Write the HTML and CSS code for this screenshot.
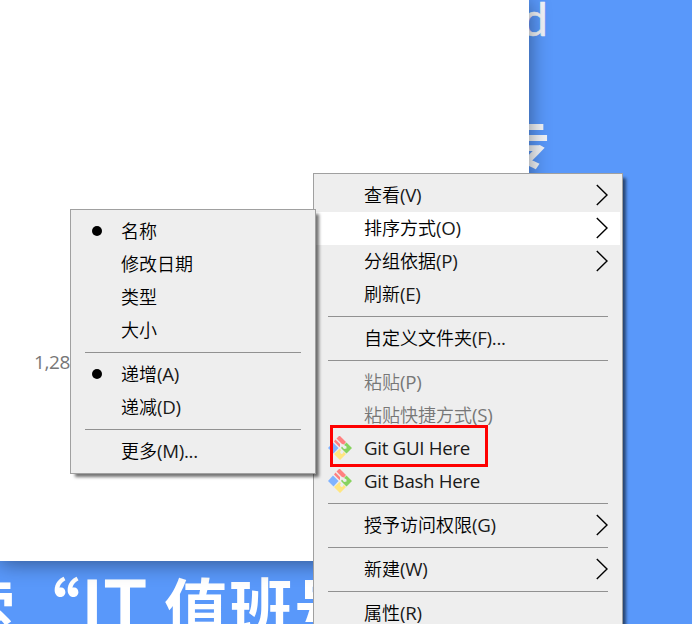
FILE: index.html
```html
<!DOCTYPE html>
<html lang="zh-CN">
<head>
<meta charset="utf-8">
<title>Desktop</title>
<link rel="stylesheet" href="styles.css">
</head>
<body>
<svg class="defs" width="0" height="0">
  <symbol id="git" viewBox="0 0 24 24">
    <path fill="#ff8080" d="M12 0L18 6L16 8.500L14 8L8.500 2.500L11 0ZM7.500 3.500L12 8L12 11L11 10.500L6 5.500Z"/>
    <path fill="#80b3ff" d="M5 6.500L10.500 12L5.500 17.500L0 12Z"/>
    <path fill="#87d35f" d="M18.500 6.500L24 12L18.500 17.500L13 12L14 10.500L16 13L18.500 12.500L18.500 10.500L16 9Z"/>
    <path fill="#ffe680" d="M11.500 13L13 14L12 16L13 18L15 17.500L15.500 15.500L18 18L12 24L6 18Z"/>
  </symbol>
  <symbol id="chev" viewBox="0 0 12 22"><path d="M.8 1L11 11L.8 21" fill="none" stroke="#000" stroke-width="1.400"/></symbol>
</svg>
<div class="desktop">
  <div class="wall wall-d">d</div>
  <div class="wall wall-zhuan">专</div>
  <div class="wall wall-line"><span class="cjk">索</span><span class="cjk">“</span><span class="it">IT</span><span class="cjk">值</span><span class="cjk">班</span><span class="cjk">号</span></div>
  <div class="window"><span class="size">1,28</span></div>

  <div class="menu main">
    <div class="item"><span>查看<i>(V)</i></span><svg class="chev"><use href="#chev"/></svg></div>
    <div class="item active"><span>排序方式<i>(O)</i></span><svg class="chev"><use href="#chev"/></svg></div>
    <div class="item"><span>分组依据<i>(P)</i></span><svg class="chev"><use href="#chev"/></svg></div>
    <div class="item"><span>刷新<i>(E)</i></span></div>
    <hr>
    <div class="item"><span>自定义文件夹<i>(F)...</i></span></div>
    <hr>
    <div class="item disabled"><span>粘贴<i>(P)</i></span></div>
    <div class="item disabled"><span>粘贴快捷方式<i>(S)</i></span></div>
    <div class="item"><svg class="git"><use href="#git"/></svg><span><i>Git GUI Here</i></span></div>
    <div class="item"><svg class="git"><use href="#git"/></svg><span><i>Git Bash Here</i></span></div>
    <hr>
    <div class="item"><span>授予访问权限<i>(G)</i></span><svg class="chev"><use href="#chev"/></svg></div>
    <hr>
    <div class="item"><span>新建<i>(W)</i></span><svg class="chev"><use href="#chev"/></svg></div>
    <hr>
    <div class="item"><span>属性<i>(R)</i></span></div>
  </div>

  <div class="menu sub">
    <div class="item"><b class="dot"></b><span>名称</span></div>
    <div class="item"><span>修改日期</span></div>
    <div class="item"><span>类型</span></div>
    <div class="item"><span>大小</span></div>
    <hr>
    <div class="item"><b class="dot"></b><span>递增<i>(A)</i></span></div>
    <div class="item"><span>递减<i>(D)</i></span></div>
    <hr>
    <div class="item"><span>更多<i>(M)...</i></span></div>
  </div>
  <div class="mark"></div>
</div>
</body>
</html>
```
FILE: styles.css
```css
body { margin: 0; }
.defs { position: absolute; }
.desktop {
  position: relative;
  width: 692px;
  height: 624px;
  overflow: hidden;
  background: #5998fa;
  font-family: "Noto Sans CJK SC", sans-serif;
}
.wall { position: absolute; color: #fff; white-space: nowrap; }
.wall-d {
  left: 522px; top: -11px;
  font: 46px/60px Lato, sans-serif;
  color: #f1f4f8;
  -webkit-text-stroke: .6px #f1f4f8;
}
.wall-zhuan { left: 498px; top: 112px; font-size: 52px; line-height: 60px; font-weight: 700; color: #f1f4f8; }
.wall-line {
  left: -49px; top: 566px;
  display: flex;
  font-size: 64px; line-height: 76px; font-weight: 700;
}
.wall-line .cjk { width: 65px; }
.wall-line .it {
  width: 83px;
  font-size: 72px; line-height: 72px; font-weight: 500;
  -webkit-text-stroke: 1px #fff;
}
.window {
  position: absolute;
  left: 0; top: 0;
  width: 529px; height: 561px;
  background: #fff;
  box-shadow: 0 2px 20px rgba(0, 0, 0, .45);
}
.size {
  position: absolute;
  left: 34px; top: 349px;
  font: 19px/26px "Open Sans", sans-serif;
  letter-spacing: -.4px;
  color: #777;
}
.menu {
  position: absolute;
  box-sizing: border-box;
  padding: 5px 2px;
  background: #eee;
  border: 1px solid #a0a0a0;
  box-shadow: 4px 4px 3px -1px rgba(0, 0, 0, .55);
}
.main { left: 313px; top: 173px; width: 310px; height: 463px; }
.sub { left: 70px; top: 209px; width: 246px; height: 265px; }
.item {
  position: relative;
  display: flex;
  align-items: center;
  justify-content: space-between;
  height: 33px;
  padding: 0 12px 0 48px;
  font-size: 18px;
  line-height: 33px;
  font-weight: 350;
  color: #000;
  white-space: nowrap;
}
.item span { position: relative; top: -1px; }
.item i { font-family: "Open Sans", sans-serif; font-style: normal; font-size: 18.7px; font-weight: 400; letter-spacing: -.3px; color: #1a1a1a; }
.active { background: #fff; }
.disabled, .disabled i { color: #777; }
.menu hr { height: 1px; margin: 5px 12px; border: 0; background: #919191; }
.chev { width: 12px; height: 22px; margin-top: -2px; }
.git { position: absolute; left: 12px; top: 4px; width: 24px; height: 24px; }
.dot { position: absolute; left: 19px; top: 11px; width: 10px; height: 10px; border-radius: 50%; background: #000; }
.mark {
  position: absolute;
  box-sizing: border-box;
  left: 330px; top: 425px;
  width: 158px; height: 42px;
  border: 3px solid #fe0000;
}
```
